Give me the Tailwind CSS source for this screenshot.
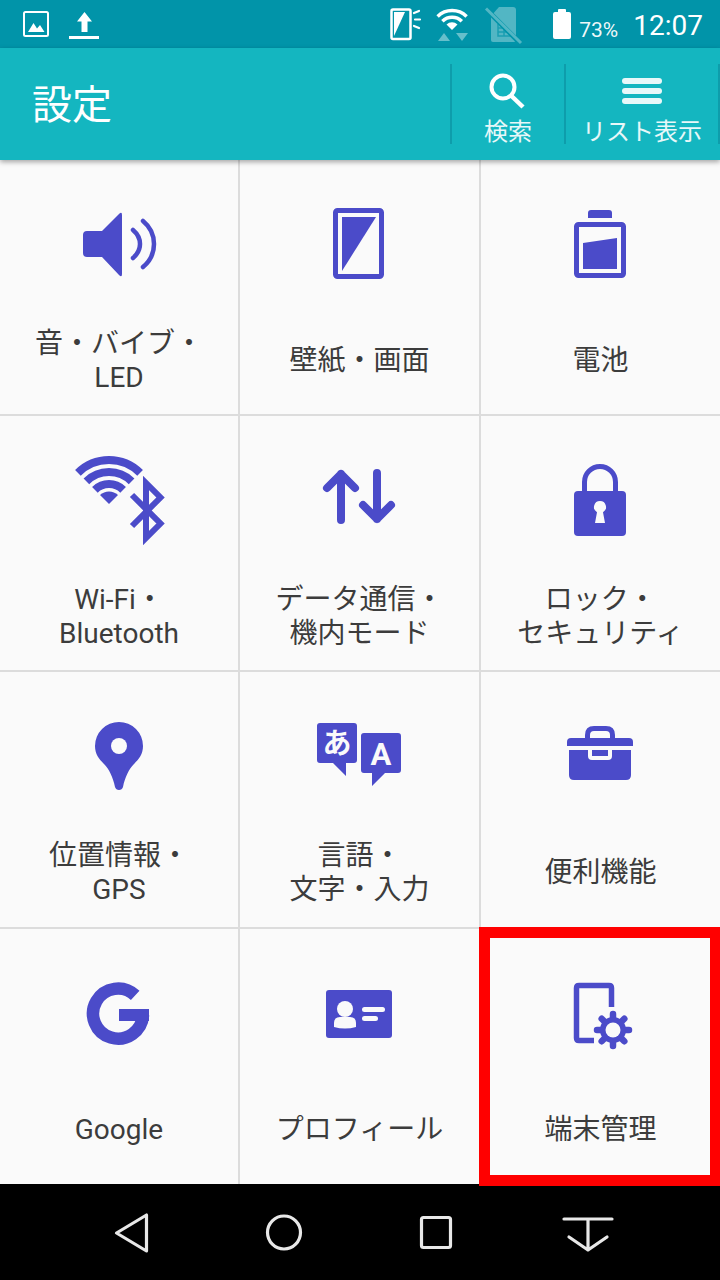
<!DOCTYPE html>
<html lang="ja">
<head>
    <meta charset="UTF-8">
    <meta name="viewport" content="width=device-width, initial-scale=1.0">
    <title>設定</title>
    <script src="https://cdn.jsdelivr.net/npm/@tailwindcss/browser@4"></script>
</head>
<body class="bg-black">
<div class="relative w-[720px] h-[1280px] overflow-hidden bg-[#fafafa] font-['Roboto','Noto_Sans_CJK_JP',sans-serif]">

    <!-- status bar -->
    <div class="flex justify-between items-start h-[48px] bg-[#0194a9] text-white">
        <svg width="110" height="48" viewBox="0 0 110 48">
            <rect x="24" y="12" width="24" height="24" rx="1.5" fill="none" stroke="#fff" stroke-width="2"/>
            <path d="M28 32l5.500-9 3.500 5.500 3-3.500 4.500 7z" fill="#fff"/>
            <path d="M84.500 12l7.500 9.500h-4.500V32h-6V21.500H77z" fill="#fff"/>
            <rect x="69" y="36" width="30" height="3" fill="#fff"/>
        </svg>
        <div class="flex items-start">
            <svg width="196" height="48" viewBox="380 0 196 48">
                <rect x="392.500" y="9.500" width="19" height="29.500" rx="1.500" fill="none" stroke="#fff" stroke-width="2.500"/>
                <path d="M395 12h11l-11 24z" fill="#fff"/>
                <path d="M415 13l5-2M416 19.500h5M415 26l5 2" stroke="#fff" stroke-width="2.200" stroke-linecap="round"/>
                <g fill="none" stroke="#fff" stroke-width="3.500">
                    <path d="M438.600 16.400a21 21 0 0 1 29 0"/>
                    <path d="M443.400 21.200a14 14 0 0 1 19.400 0"/>
                </g>
                <path d="M453 30l-5.500-5.500a8 8 0 0 1 11 0z" fill="#fff"/>
                <path d="M445 33l6 8h-12zM457 33h12l-6 8z" fill="#fff" fill-opacity="0.4"/>
                <path d="M500 7h14q3 0 3 3v30q0 2-2 2h-21q-2 0-2-2V16z" fill="#fff" fill-opacity="0.32"/>
                <path d="M499 24v12h13v-4h-13M505 28v8M499 28h7" fill="none" stroke="#0194a9" stroke-opacity="0.7" stroke-width="1.500"/>
                <path d="M485 7l36 36" stroke="#0194a9" stroke-width="5"/>
                <path d="M487 8.500l35 34.500" stroke="#fff" stroke-opacity="0.32" stroke-width="3"/>
                <path d="M559 12V10q0-1 1-1h6q1 0 1 1v2h3q2 0 2 2v23q0 2-2 2h-14q-2 0-2-2V14q0-2 2-2z" fill="#fff"/>
            </svg>
            <span class="mt-[18px] ml-[4px] text-[21px] leading-[24px] text-white/95">73%</span>
            <span class="mt-[10px] ml-[15px] mr-[17px] text-[28px] leading-[32px]">12:07</span>
        </div>
    </div>

    <!-- header -->
    <div class="relative z-10 flex items-start h-[112px] pt-[16px] bg-[#14b6c0] text-white shadow-[0_2px_5px_rgba(0,0,0,0.35)]">
        <div class="flex-1 pl-[32px] pt-[18px] text-[40px] leading-[48px]">設定</div>
        <div class="flex flex-col items-center w-[114px] h-[80px] border-l-2 border-[#0e9dab]">
            <svg width="50" height="46" viewBox="483 64 50 46" class="shrink-0">
                <circle cx="503" cy="87" r="11.500" fill="none" stroke="#fff" stroke-width="4"/>
                <path d="M511 95.500l12 11.500" stroke="#fff" stroke-width="4.500"/>
            </svg>
            <span class="mt-[8px] text-[24px] leading-[28px] text-white/90">検索</span>
        </div>
        <div class="flex flex-col items-center w-[156px] h-[80px] border-l-2 border-r-2 border-[#0e9dab]">
            <div class="flex flex-col gap-[4px] mt-[14px] w-[40px] shrink-0">
                <div class="h-[6px] rounded-full bg-white/90"></div>
                <div class="h-[6px] rounded-full bg-white/90"></div>
                <div class="h-[6px] rounded-full bg-white/90"></div>
            </div>
            <span class="mt-[14px] whitespace-nowrap text-[24px] leading-[28px] text-white/90">リスト表示</span>
        </div>
    </div>

    <!-- settings grid -->
    <div class="grid grid-cols-[240px_241px_239px] grid-rows-[256px_256px_257px_255px] text-[28px] leading-[34px] text-[#3c3c3c]">

        <div class="flex flex-col items-center pt-[44px] border-r-2 border-b-2 border-[#dcdcdc]">
            <svg width="100" height="80" viewBox="69 204 100 80">
                <path d="M83 235q0-4 4-4h15l17-17q3-3 3 1v59q0 4-3 1l-17-18H87q-4 0-4-4z" fill="#4b4bc9"/>
                <path d="M133 230q7 6 7 14t-7 14M143 221q11 9 11 23t-11 23" fill="none" stroke="#4b4bc9" stroke-width="4.500" stroke-linecap="round"/>
            </svg>
            <div class="mt-[43px] h-[68px] flex items-center justify-center text-center">音・バイブ・<br>LED</div>
        </div>
        <div class="flex flex-col items-center pt-[44px] border-r-2 border-b-2 border-[#dcdcdc]">
            <svg width="100" height="80" viewBox="310 204 100 80">
                <rect x="335.500" y="210.500" width="46" height="66" rx="2" fill="none" stroke="#4b4bc9" stroke-width="5"/>
                <path d="M342 217h34l-34 54z" fill="#4b4bc9"/>
            </svg>
            <div class="mt-[43px] h-[68px] flex items-center justify-center text-center">壁紙・画面</div>
        </div>
        <div class="flex flex-col items-center pt-[44px] border-b-2 border-[#dcdcdc]">
            <svg width="100" height="80" viewBox="551 204 100 80">
                <path d="M588 218v-5q0-3 3-3h18q3 0 3 3v5z" fill="#4b4bc9"/>
                <rect x="576.500" y="224.500" width="47" height="51" rx="2" fill="none" stroke="#4b4bc9" stroke-width="5"/>
                <path d="M583 243l34-5v31h-34z" fill="#4b4bc9"/>
            </svg>
            <div class="mt-[43px] h-[68px] flex items-center justify-center text-center">電池</div>
        </div>

        <div class="flex flex-col items-center pt-[44px] border-r-2 border-b-2 border-[#dcdcdc]">
            <svg width="100" height="80" viewBox="69 460 100 80" class="overflow-visible">
                <g fill="none" stroke="#4b4bc9" stroke-width="8">
                    <path d="M77.900 472.900a44 44 0 0 1 62.200 0"/>
                    <path d="M86.400 481.400a32 32 0 0 1 45.200 0"/>
                    <path d="M94.900 489.900a20 20 0 0 1 28.200 0"/>
                </g>
                <path d="M109 504l-9-9a13 13 0 0 1 18 0z" fill="#4b4bc9"/>
                <path d="M132 495l28.500 28.500L146 538V483l14.500 14.500L132 526" fill="none" stroke="#4b4bc9" stroke-width="6"/>
            </svg>
            <div class="mt-[43px] h-[68px] flex items-center justify-center text-center">Wi-Fi・<br>Bluetooth</div>
        </div>
        <div class="flex flex-col items-center pt-[44px] border-r-2 border-b-2 border-[#dcdcdc]">
            <svg width="100" height="80" viewBox="310 460 100 80">
                <path d="M341 520V474M327 488l14-14 14 14M377 473v46M363 505l14 14 14-14" fill="none" stroke="#4b4bc9" stroke-width="8" stroke-linecap="round" stroke-linejoin="round"/>
            </svg>
            <div class="mt-[43px] h-[68px] flex items-center justify-center text-center">データ通信・<br>機内モード</div>
        </div>
        <div class="flex flex-col items-center pt-[44px] border-b-2 border-[#dcdcdc]">
            <svg width="100" height="80" viewBox="551 460 100 80">
                <path d="M584.500 492V482a15.500 15.500 0 0 1 31 0V492" fill="none" stroke="#4b4bc9" stroke-width="5"/>
                <rect x="574" y="491" width="52" height="45" rx="4" fill="#4b4bc9"/>
                <path d="M600 501a6 6 0 0 1 3 11.200l2 10.800h-10l2-10.800a6 6 0 0 1 3-11.200z" fill="#fafafa"/>
            </svg>
            <div class="mt-[43px] h-[68px] flex items-center justify-center text-center">ロック・<br>セキュリティ</div>
        </div>

        <div class="flex flex-col items-center pt-[44px] border-r-2 border-b-2 border-[#dcdcdc]">
            <svg width="100" height="80" viewBox="69 716 100 80">
                <path d="M119 722a24 24 0 0 1 24 24c0 8-4 13-9 18-5 5-9 13-11 23q-1 3-4 3t-4-3c-2-10-6-18-11-23-5-5-9-10-9-18a24 24 0 0 1 24-24z" fill="#4b4bc9"/>
                <circle cx="119" cy="746" r="8" fill="#fafafa"/>
            </svg>
            <div class="mt-[43px] h-[68px] flex items-center justify-center text-center">位置情報・<br>GPS</div>
        </div>
        <div class="flex flex-col items-center pt-[44px] border-r-2 border-b-2 border-[#dcdcdc]">
            <svg width="100" height="80" viewBox="310 716 100 80">
                <path d="M320 723h34q3 0 3 3v34q0 3-3 3h-8v13l-13-13h-13q-3 0-3-3v-34q0-3 3-3z" fill="#4b4bc9"/>
                <path d="M364 733h34q3 0 3 3v34q0 3-3 3h-13l-13 13v-13h-8q-3 0-3-3v-34q0-3 3-3z" fill="#4b4bc9"/>
                <text x="337" y="754" text-anchor="middle" font-size="29" font-weight="700" fill="#fafafa">あ</text>
                <text x="381" y="765" text-anchor="middle" font-size="31" font-weight="700" fill="#fafafa">A</text>
            </svg>
            <div class="mt-[43px] h-[68px] flex items-center justify-center text-center">言語・<br>文字・入力</div>
        </div>
        <div class="flex flex-col items-center pt-[44px] border-b-2 border-[#dcdcdc]">
            <svg width="100" height="80" viewBox="551 716 100 80">
                <path d="M587.500 738v-3q0-6.500 6.500-6.500h12q6.500 0 6.500 6.500v3" fill="none" stroke="#4b4bc9" stroke-width="5"/>
                <path d="M567 746v-4q0-4 4-4h58q4 0 4 4v4z" fill="#4b4bc9"/>
                <path d="M569 750h62v25q0 5-5 5h-52q-5 0-5-5z" fill="#4b4bc9"/>
                <path d="M588 750h24v6q0 4-4 4h-16q-4 0-4-4z" fill="#fafafa"/>
                <rect x="592" y="750" width="16" height="6" fill="#4b4bc9"/>
            </svg>
            <div class="mt-[43px] h-[68px] flex items-center justify-center text-center">便利機能</div>
        </div>

        <div class="flex flex-col items-center pt-[45px] border-r-2 border-[#dcdcdc]">
            <svg width="100" height="80" viewBox="69 973 100 80">
                <path d="M135.200 994.400A25 25 0 1 0 143 1014" fill="none" stroke="#4b4bc9" stroke-width="12.500"/>
                <rect x="119" y="1008" width="30" height="12" fill="#4b4bc9"/>
            </svg>
            <div class="mt-[42px] h-[68px] flex items-center justify-center text-center">Google</div>
        </div>
        <div class="flex flex-col items-center pt-[45px] border-r-2 border-[#dcdcdc]">
            <svg width="100" height="80" viewBox="310 973 100 80">
                <rect x="326" y="989" width="66" height="48" rx="3" fill="#4b4bc9"/>
                <circle cx="345" cy="1008" r="8" fill="#fafafa"/>
                <path d="M334 1022q0-6 6-6h10q6 0 6 6v4q-11 3-22 0z" fill="#fafafa"/>
                <rect x="362" y="1006" width="23" height="5" rx="2.500" fill="#fafafa"/>
                <rect x="362" y="1015" width="16" height="5" rx="2.500" fill="#fafafa"/>
            </svg>
            <div class="mt-[42px] h-[68px] flex items-center justify-center text-center">プロフィール</div>
        </div>
        <div class="flex flex-col items-center pt-[45px]">
            <svg width="100" height="80" viewBox="551 973 100 80">
                <path d="M594 1039.500H579q-2.500 0-2.500-2.500v-50q0-2.500 2.500-2.500h30q2.500 0 2.500 2.500v19" fill="none" stroke="#4b4bc9" stroke-width="5.500"/>
                <circle cx="613" cy="1029" r="20" fill="#fafafa"/>
                <g stroke="#4b4bc9" stroke-width="6.500" stroke-linecap="round">
                    <path d="M597 1029h32M613 1013v32M601.700 1017.700l22.600 22.600M624.300 1017.700l-22.600 22.600"/>
                </g>
                <circle cx="613" cy="1029" r="13" fill="#4b4bc9"/>
                <circle cx="613" cy="1029" r="7.500" fill="#fafafa"/>
            </svg>
            <div class="mt-[42px] h-[68px] flex items-center justify-center text-center">端末管理</div>
        </div>
    </div>

    <!-- nav bar -->
    <div class="h-[96px] bg-black">
        <svg width="720" height="96" viewBox="0 1184 720 96">
            <g fill="none" stroke="#e8e8e8" stroke-width="3.200" stroke-linecap="round" stroke-linejoin="round">
                <path d="M146.500 1215v36l-30-18z"/>
                <circle cx="284" cy="1232.500" r="16.500"/>
                <rect x="421.500" y="1217.500" width="29" height="30" rx="2"/>
                <path d="M564 1219h48M588 1219v31M569 1237l19 13 19-13"/>
            </g>
        </svg>
    </div>

    <!-- red highlight round the last item -->
    <div class="absolute left-[479px] top-[927px] w-[241px] h-[259px] border-solid border-[#ff0000] border-t-[11px] border-b-[11px] border-l-[11px] border-r-[10px]"></div>
</div>
</body>
</html>
